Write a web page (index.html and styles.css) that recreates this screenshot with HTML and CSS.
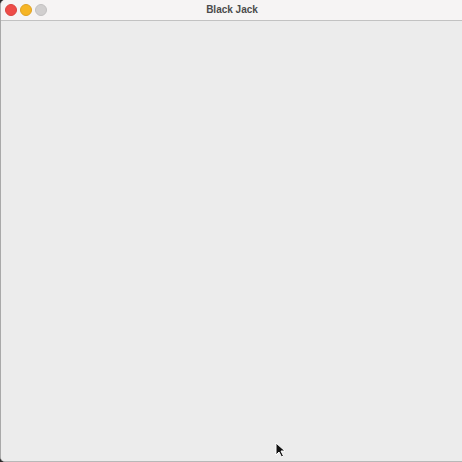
FILE: index.html
```html
<!DOCTYPE html>
<html>
<head>
<meta charset="utf-8">
<title>Black Jack</title>
<link rel="stylesheet" href="styles.css">
</head>
<body>
<div class="window">
  <div class="titlebar">
    <div class="lights">
      <span class="light close"></span>
      <span class="light minimize"></span>
      <span class="light zoom"></span>
    </div>
    <div class="title">Black Jack</div>
  </div>
  <div class="content"></div>
  <svg class="cursor" width="12" height="16" viewBox="0 0 12 16">
    <path d="M1 1 L1 13 L4 10 L6.5 15 L8.5 14 L6 9 L10 9 Z" fill="#111" stroke="#fff" stroke-width="1"/>
  </svg>
</div>
</body>
</html>
```

FILE: styles.css
```css
html, body {
  margin: 0;
  padding: 0;
  width: 462px;
  height: 462px;
  overflow: hidden;
  background: #2a2a2a;
}
.window {
  position: relative;
  width: 462px;
  height: 462px;
  box-sizing: border-box;
  display: flex;
  flex-direction: column;
  background: #ececec;
  border-left: 1px solid #a9a9a9;
  border-bottom: 1px solid #b8b8b8;
  border-radius: 5px 0 0 5px;
  overflow: hidden;
  font-family: "Liberation Sans", Arial, sans-serif;
}
.titlebar {
  position: relative;
  height: 20px;
  flex: 0 0 20px;
  background: #f6f4f4;
  border-bottom: 1px solid #c2c2c2;
  display: flex;
  align-items: center;
}
.lights {
  display: flex;
  gap: 3px;
  padding-left: 4px;
  margin-top: -1px;
}
.light {
  width: 12px;
  height: 12px;
  border-radius: 50%;
  box-sizing: border-box;
}
.close { background: #ee4c48; border: 1px solid #d94440; }
.minimize { background: #f6b524; border: 1px solid #dea123; }
.zoom { background: #d1cfcf; border: 1px solid #c2c0c0; }
.title {
  position: absolute;
  left: 0;
  right: 0;
  top: 4px;
  text-align: center;
  font-size: 10px;
  font-weight: bold;
  color: #4b4b4b;
  padding-left: 1px;
}
.content {
  flex: 1;
  background: #ececec;
}
.cursor {
  position: absolute;
  left: 274px;
  top: 442px;
}
```
